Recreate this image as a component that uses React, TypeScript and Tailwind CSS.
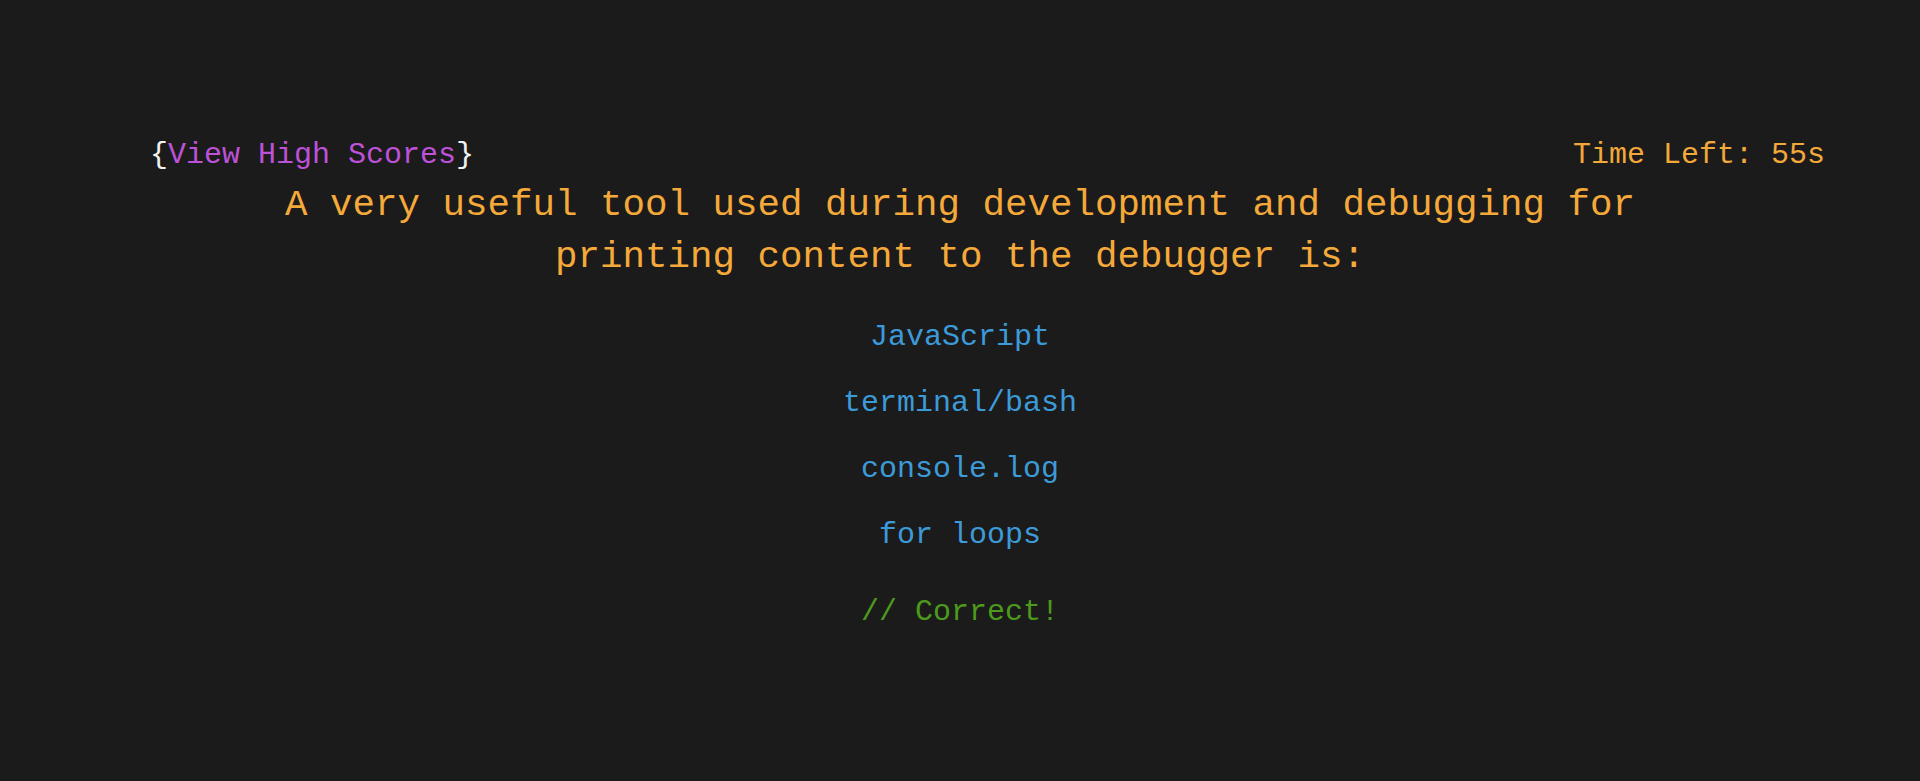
const options = ["JavaScript", "terminal/bash", "console.log", "for loops"];

export default function App() {
  return (
    <div className="min-h-screen w-full bg-[#1b1b1b] pt-[138px] font-['Liberation_Mono','Courier_New',monospace]">
      {/* header row */}
      <div className="flex items-center justify-between pl-[150px] pr-[95px] text-[30px] leading-[34px]">
        <a className="cursor-pointer">
          <span className="text-[#f2f2f2]">{"{"}</span>
          <span className="text-[#bd52d8]">View High Scores</span>
          <span className="text-[#f2f2f2]">{"}"}</span>
        </a>
        <p className="text-[#f2a83a]">Time Left: 55s</p>
      </div>

      {/* question */}
      <h1 className="mx-auto mt-[7px] w-[1420px] text-center text-[37.5px] leading-[52px] text-[#f4a93a]">
        A very useful tool used during development and debugging for printing content to the debugger is:
      </h1>

      {/* answers */}
      <ul className="mt-[37px] flex flex-col items-center gap-[32px] text-[30px] leading-[34px] text-[#3d9ad8]">
        {options.map((opt) => (
          <li key={opt} className="cursor-pointer">
            {opt}
          </li>
        ))}
      </ul>

      <p className="mt-[43px] text-center text-[30px] leading-[34px] text-[#4b9a1c]">// Correct!</p>
    </div>
  );
}
